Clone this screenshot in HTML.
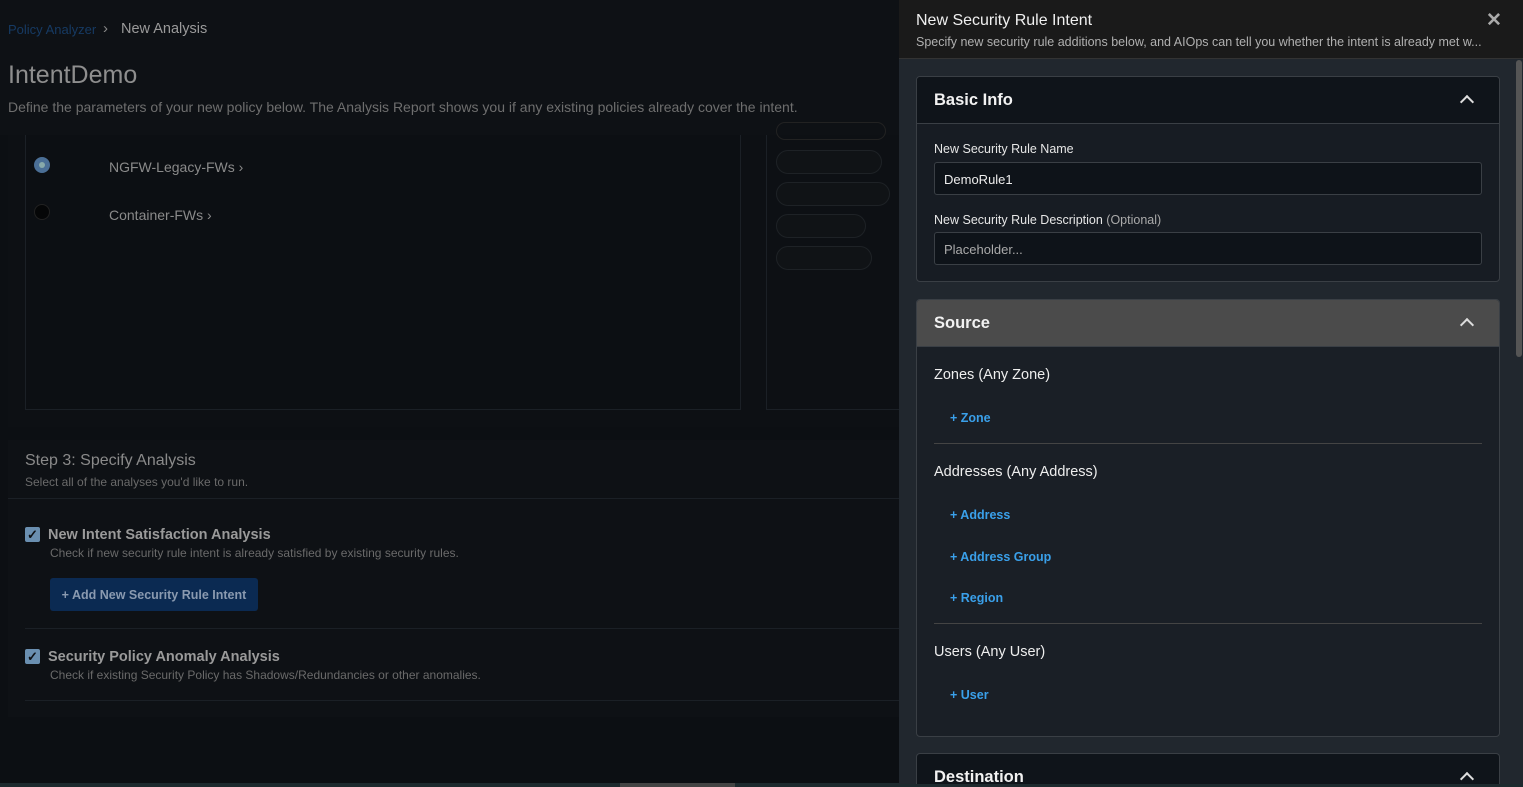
<!DOCTYPE html>
<html style="overflow:hidden;height:787px"><head><meta charset="utf-8"><style>
*{box-sizing:border-box;margin:0;padding:0}
body{width:1523px;height:787px;overflow:hidden;background:#0c0f13;font-family:"Liberation Sans",sans-serif;position:relative}
.a{position:absolute;white-space:nowrap}
</style></head><body>
<div class="a" style="left:0;top:0;width:899px;height:135px;background:#0e1115"></div>
<div class="a" style="left:8px;top:22px;font-size:13px;color:#163a63">Policy Analyzer</div>
<div class="a" style="left:103px;top:20px;font-size:15px;color:#888">›</div>
<div class="a" style="left:121px;top:21px;font-size:14.5px;color:#9a9a9a">New Analysis</div>
<div class="a" style="left:8px;top:61px;font-size:25px;color:#8e8e8e">IntentDemo</div>
<div class="a" style="left:8px;top:99px;font-size:14px;color:#6e6e6e">Define the parameters of your new policy below. The Analysis Report shows you if any existing policies already cover the intent.</div>
<div class="a" style="left:8px;top:135px;width:891px;height:292px;background:#0d1014"></div>
<div class="a" style="left:25px;top:135px;width:716px;height:275px;border:1px solid #1b2026;border-top:none;background:#0c0f13"></div>
<div class="a" style="left:766px;top:135px;width:140px;height:275px;border:1px solid #1b2026;border-top:none"></div>
<div class="a" style="left:34px;top:157px;width:16px;height:16px;border-radius:50%;background:#4b6f96;border:4px solid #4b6f96"><div style="width:6px;height:6px;margin:1px;border-radius:50%;background:#8aa"></div></div>
<div class="a" style="left:109px;top:159px;font-size:14px;color:#8a8a8a">NGFW-Legacy-FWs ›</div>
<div class="a" style="left:34px;top:204px;width:16px;height:16px;border-radius:50%;background:#050607;border:1px solid #222"></div>
<div class="a" style="left:109px;top:207px;font-size:14px;color:#8a8a8a">Container-FWs ›</div>
<div class="a" style="left:776px;top:122px;width:110px;height:18px;border:1px solid #222;border-radius:10px"></div>
<div class="a" style="left:776px;top:150px;width:106px;height:24px;border:1px solid #1e2226;border-radius:12px;background:#101316"></div>
<div class="a" style="left:776px;top:182px;width:114px;height:24px;border:1px solid #1e2226;border-radius:12px;background:#101316"></div>
<div class="a" style="left:776px;top:214px;width:90px;height:24px;border:1px solid #1e2226;border-radius:12px;background:#101316"></div>
<div class="a" style="left:776px;top:246px;width:96px;height:24px;border:1px solid #1e2226;border-radius:12px;background:#101316"></div>
<div class="a" style="left:8px;top:440px;width:891px;height:277px;background:#0e1115"></div>
<div class="a" style="left:25px;top:452px;font-size:16px;color:#8a8a8a">Step 3: Specify Analysis</div>
<div class="a" style="left:25px;top:475px;font-size:12px;color:#6a6a6a">Select all of the analyses you'd like to run.</div>
<div class="a" style="left:8px;top:498px;width:891px;height:1px;background:#1b2026"></div>
<div class="a" style="left:25px;top:527px;width:15px;height:15px;background:#6a8fb0;border-radius:2px;color:#0e1115;font-size:13px;line-height:15px;text-align:center;font-weight:bold">✓</div>
<div class="a" style="left:48px;top:527px;font-size:14.5px;color:#9a9a9a;font-weight:bold">New Intent Satisfaction Analysis</div>
<div class="a" style="left:50px;top:546px;font-size:12px;color:#6a6a6a">Check if new security rule intent is already satisfied by existing security rules.</div>
<div class="a" style="left:50px;top:578px;width:208px;height:33px;background:#0b2a52;border-radius:3px;color:#8a9ab0;font-size:12.5px;font-weight:bold;line-height:34px;text-align:center">+ Add New Security Rule Intent</div>
<div class="a" style="left:25px;top:628px;width:874px;height:1px;background:#1b2026"></div>
<div class="a" style="left:25px;top:649px;width:15px;height:15px;background:#6a8fb0;border-radius:2px;color:#0e1115;font-size:13px;line-height:15px;text-align:center;font-weight:bold">✓</div>
<div class="a" style="left:48px;top:649px;font-size:14.5px;color:#9a9a9a;font-weight:bold">Security Policy Anomaly Analysis</div>
<div class="a" style="left:50px;top:668px;font-size:12px;color:#6a6a6a">Check if existing Security Policy has Shadows/Redundancies or other anomalies.</div>
<div class="a" style="left:25px;top:700px;width:874px;height:1px;background:#1b2026"></div>
<div class="a" style="left:0;top:783px;width:899px;height:4px;background:#1d2a2e"></div>
<div class="a" style="left:620px;top:783px;width:115px;height:4px;background:#444"></div>
<div class="a" style="left:899px;top:0;width:624px;height:787px;background:#21272e"></div>
<div class="a" style="left:899px;top:0;width:624px;height:59px;background:#1a1a1a;border-bottom:1px solid #333"></div>
<div class="a" style="left:916px;top:12px;font-size:16px;color:#f0f0f0">New Security Rule Intent</div>
<div class="a" style="left:916px;top:35px;font-size:12.5px;color:#b0b0b0">Specify new security rule additions below, and AIOps can tell you whether the intent is already met w...</div>
<div class="a" style="left:1486px;top:9px;font-size:19px;color:#aaa;font-weight:bold">✕</div>
<div class="a" style="left:1516px;top:60px;width:6px;height:297px;background:#555;border-radius:3px"></div>
<div class="a" style="left:916px;top:76px;width:584px;height:206px;border:1px solid #3a3f45;border-radius:4px;background:#171c23;overflow:hidden">
 <div style="height:47px;background:#0f141a;border-bottom:1px solid #3a3f45"></div></div>
<div class="a" style="left:934px;top:91px;font-size:16.5px;color:#f2f2f2;font-weight:bold">Basic Info</div>
<div class="a" style="left:1462px;top:97px;width:10px;height:10px;border-left:2.5px solid #ddd;border-top:2.5px solid #ddd;transform:rotate(45deg)"></div>
<div class="a" style="left:934px;top:142px;font-size:12.5px;color:#e6e6e6">New Security Rule Name</div>
<div class="a" style="left:934px;top:162px;width:548px;height:33px;background:#0e1319;border:1px solid #3a3f45;border-radius:3px;font-size:13px;color:#eee;padding:9px 9px">DemoRule1</div>
<div class="a" style="left:934px;top:213px;font-size:12.5px;color:#e6e6e6">New Security Rule Description <span style="color:#aaa">(Optional)</span></div>
<div class="a" style="left:934px;top:232px;width:548px;height:33px;background:#0e1319;border:1px solid #3a3f45;border-radius:3px;font-size:13px;color:#aaa;padding:9px 9px">Placeholder...</div>
<div class="a" style="left:916px;top:299px;width:584px;height:438px;border:1px solid #3a3f45;border-radius:4px;background:#1a1f26;overflow:hidden">
 <div style="height:47px;background:#4b4b4b;border-bottom:1px solid #3a3f45"></div></div>
<div class="a" style="left:934px;top:314px;font-size:16.5px;color:#f2f2f2;font-weight:bold">Source</div>
<div class="a" style="left:1462px;top:320px;width:10px;height:10px;border-left:2.5px solid #ddd;border-top:2.5px solid #ddd;transform:rotate(45deg)"></div>
<div class="a" style="left:934px;top:367px;font-size:14.5px;color:#eee">Zones (Any Zone)</div>
<div class="a" style="left:950px;top:411px;font-size:12.5px;color:#3aa0ea;font-weight:bold">+ Zone</div>
<div class="a" style="left:934px;top:443px;width:548px;height:1px;background:#444"></div>
<div class="a" style="left:934px;top:464px;font-size:14.5px;color:#eee">Addresses (Any Address)</div>
<div class="a" style="left:950px;top:508px;font-size:12.5px;color:#3aa0ea;font-weight:bold">+ Address</div>
<div class="a" style="left:950px;top:550px;font-size:12.5px;color:#3aa0ea;font-weight:bold">+ Address Group</div>
<div class="a" style="left:950px;top:591px;font-size:12.5px;color:#3aa0ea;font-weight:bold">+ Region</div>
<div class="a" style="left:934px;top:623px;width:548px;height:1px;background:#444"></div>
<div class="a" style="left:934px;top:644px;font-size:14.5px;color:#eee">Users (Any User)</div>
<div class="a" style="left:950px;top:688px;font-size:12.5px;color:#3aa0ea;font-weight:bold">+ User</div>
<div class="a" style="left:916px;top:753px;width:584px;height:34px;border:1px solid #3a3f45;border-bottom:none;border-radius:4px 4px 0 0;background:#0f141a"></div>
<div class="a" style="left:934px;top:768px;font-size:16.5px;color:#f2f2f2;font-weight:bold">Destination</div>
<div class="a" style="left:1462px;top:774px;width:10px;height:10px;border-left:2.5px solid #ddd;border-top:2.5px solid #ddd;transform:rotate(45deg)"></div>
<div class="a" style="left:899px;top:784px;width:624px;height:3px;background:#1d2a2e"></div>
</body></html>
